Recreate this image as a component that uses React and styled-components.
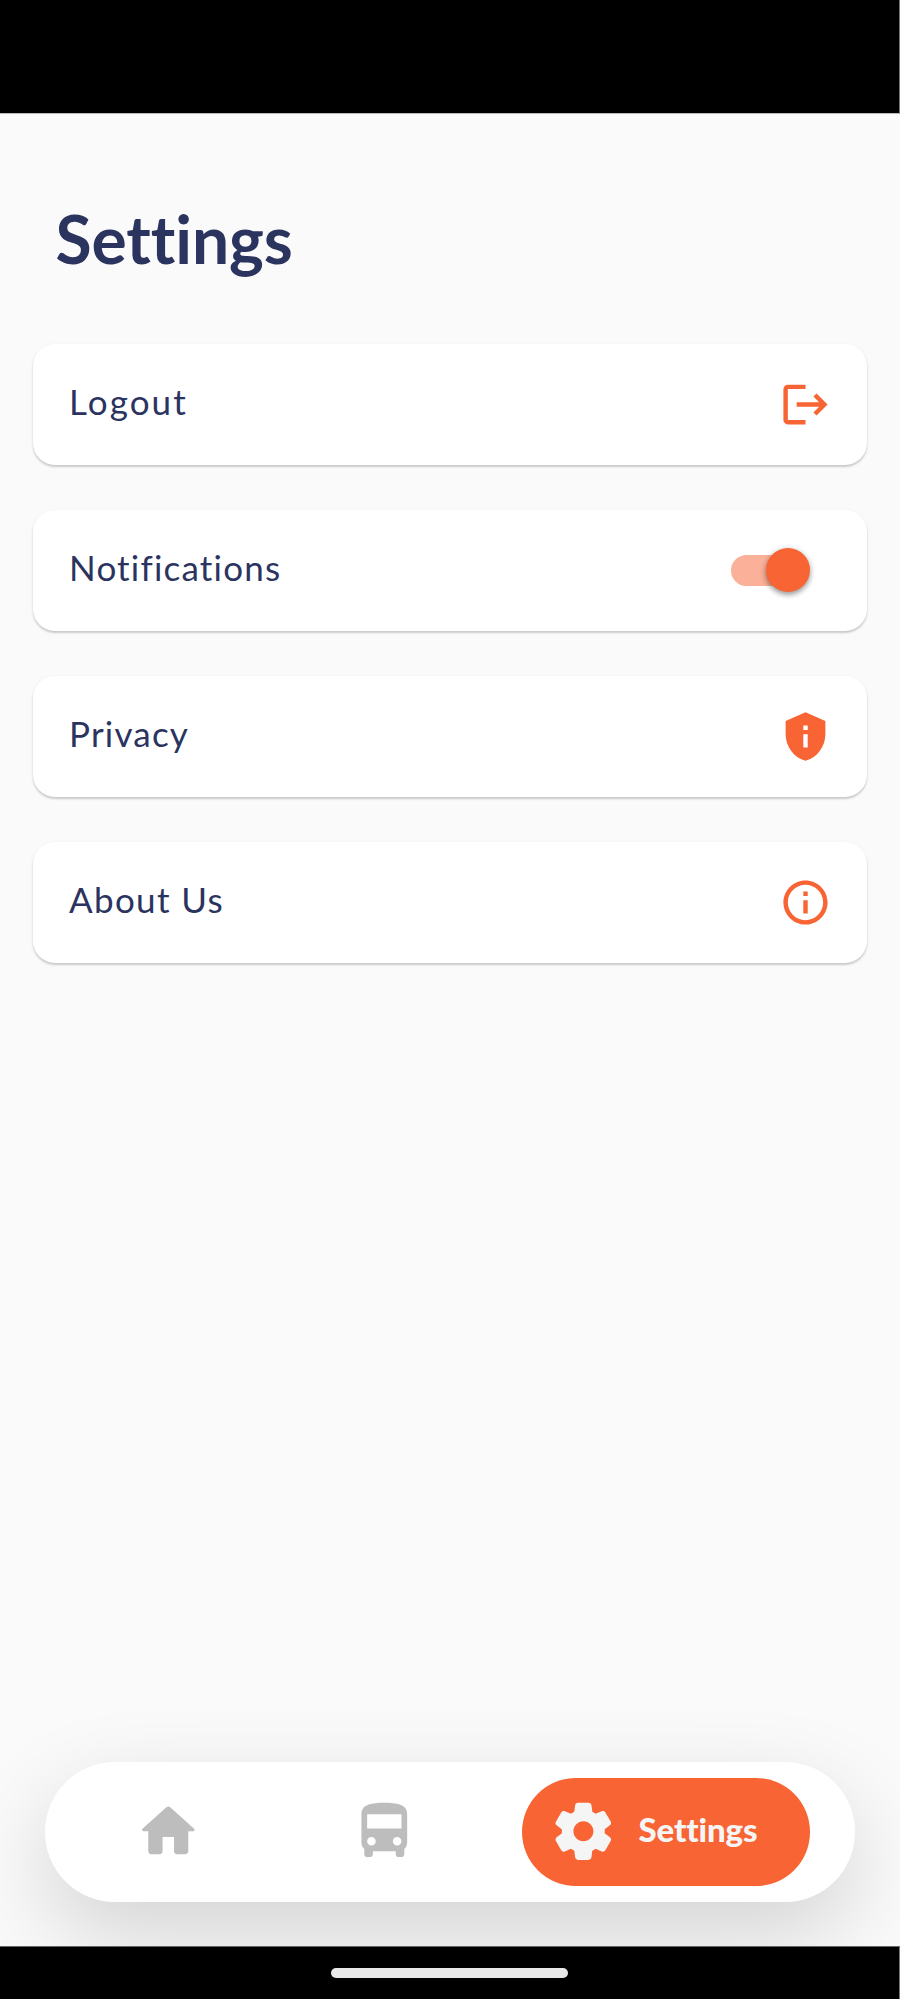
import React, { useState } from "react";
import styled, { createGlobalStyle } from "styled-components";

const colors = {
  navy: "#2b345f",
  orange: "#f86434",
  track: "#fbb099",
  page: "#fafafa",
  idle: "#bdbdbd",
  onOrange: "#f5f5f5",
};

const GlobalStyle = createGlobalStyle`
  * { box-sizing: border-box; }
  body { margin: 0; background: ${colors.page}; }
  button { border: 0; padding: 0; background: none; font: inherit; color: inherit; }
`;

const Screen = styled.div`
  width: 900px;
  height: 1999px;
  display: flex;
  flex-direction: column;
  overflow: hidden;
  background: ${colors.page};
  color: ${colors.navy};
  font-family: Lato, "Liberation Sans", sans-serif;
`;

const StatusBar = styled.div`
  flex: 0 0 114px;
  background: #000;
  border-bottom: 1px solid #b9b9b9;
  border-right: 1px solid #777;
`;

const Content = styled.main`
  flex: 1;
  min-height: 0;
  display: flex;
  flex-direction: column;
  padding: 85px 33px 44px;
`;

const Title = styled.h1`
  margin: 0 0 64.5px 22.5px;
  height: 80px;
  line-height: 80px;
  font-size: 66px;
  font-weight: 700;
  letter-spacing: -0.1px;
  white-space: nowrap;
`;

const List = styled.div`
  display: flex;
  flex-direction: column;
  gap: 44.5px;
`;

const Card = styled.div`
  height: 121.5px;
  display: flex;
  align-items: center;
  justify-content: space-between;
  padding: 0 35px 0 36px;
  border-radius: 22px;
  background: #fff;
  box-shadow: 0 2px 2px rgba(0, 0, 0, 0.17), 0 1px 4px rgba(0, 0, 0, 0.05);
`;

const CardLabel = styled.span`
  font-size: 35px;
  line-height: 46px;
  padding-bottom: 6px;
  letter-spacing: ${(p) => p.$spacing}px;
  white-space: nowrap;
`;

const Icon = styled.svg`
  display: block;
  flex: none;
  width: ${(p) => p.$size}px;
  height: ${(p) => p.$size}px;
  fill: currentColor;
`;

const CardIcon = styled(Icon)`
  color: ${colors.orange};
`;

const Switch = styled.button`
  display: flex;
  align-items: center;
  justify-content: ${(p) => (p.$on ? "flex-end" : "flex-start")};
  width: 73px;
  height: 31px;
  margin-right: 28px;
  border-radius: 16px;
  background: ${(p) => (p.$on ? colors.track : "#c4c4c4")};
`;

const Knob = styled.span`
  flex: none;
  width: 44px;
  height: 44px;
  margin: 0 -6px;
  border-radius: 50%;
  background: ${colors.orange};
  box-shadow: 0 3px 5px rgba(0, 0, 0, 0.3), 0 1px 7px rgba(0, 0, 0, 0.16);
`;

const NavBar = styled.nav`
  margin: auto 12px 0;
  height: 140px;
  flex: none;
  display: flex;
  align-items: center;
  padding: 0 45px 0 89px;
  border-radius: 70px;
  background: #fff;
  box-shadow: 0 33px 90px rgba(0, 0, 0, 0.158);
`;

const NavItem = styled.button`
  display: flex;
  margin-right: ${(p) => p.$after}px;
  padding-bottom: 1px;
  color: ${colors.idle};
`;

const ActiveItem = styled(NavItem)`
  width: 288px;
  height: 108px;
  align-items: center;
  gap: 21px;
  margin-left: auto;
  padding: 0 0 2px 27px;
  border-radius: 54px;
  background: ${colors.orange};
  color: ${colors.onOrange};
`;

const ActiveLabel = styled.span`
  font-size: 33px;
  font-weight: 900;
  line-height: 40px;
  padding-bottom: 4px;
  letter-spacing: -0.15px;
  white-space: nowrap;
`;

const GestureBar = styled.div`
  flex: 0 0 53px;
  display: flex;
  align-items: center;
  justify-content: center;
  background: #000;
  border-top: 1px solid #666;
  border-right: 1px solid #777;
`;

const GestureHandle = styled.div`
  width: 237px;
  height: 10px;
  border-radius: 5px;
  background: #e8e8e8;
`;

const paths = {
  logout:
    "M17 7l-1.41 1.41L18.17 11H8v2h10.17l-2.58 2.58L17 17l5-5zM4 5h8V3H4c-1.1 0-2 .9-2 2v14c0 1.1.9 2 2 2h8v-2H4V5z",
  privacy:
    "M12 1L3 5v6c0 5.55 3.84 10.74 9 12 5.16-1.26 9-6.45 9-12V5l-9-4zM11 7h2v2h-2V7zm0 4h2v6h-2v-6z",
  info:
    "M11 7h2v2h-2zm0 4h2v6h-2zm1-9C6.48 2 2 6.48 2 12s4.48 10 10 10 10-4.48 10-10S17.52 2 12 2zm0 18c-4.41 0-8-3.59-8-8s3.59-8 8-8 8 3.59 8 8-3.59 8-8 8z",
  home:
    "M10 19v-5h4v5c0 .55.45 1 1 1h3c.55 0 1-.45 1-1v-7h1.7c.46 0 .68-.57.33-.87L12.67 3.6c-.38-.34-.96-.34-1.34 0l-8.36 7.53c-.34.3-.13.87.33.87H5v7c0 .55.45 1 1 1h3c.55 0 1-.45 1-1z",
  bus:
    "M4 16c0 .88.39 1.67 1 2.22V20c0 .55.45 1 1 1h1c.55 0 1-.45 1-1v-1h8v1c0 .55.45 1 1 1h1c.55 0 1-.45 1-1v-1.78c.61-.55 1-1.34 1-2.22V6c0-3.5-3.58-4-8-4s-8 .5-8 4v10zm3.5 1c-.83 0-1.5-.67-1.5-1.5S6.67 14 7.5 14s1.5.67 1.5 1.5S8.33 17 7.5 17zm9 0c-.83 0-1.5-.67-1.5-1.5s.67-1.5 1.5-1.5 1.5.67 1.5 1.5-.67 1.5-1.5 1.5zm1.5-6H6V6h12v5z",
  settings:
    "M19.5 12c0-.23-.01-.45-.03-.68l1.86-1.41c.4-.3.51-.86.26-1.3l-1.87-3.23c-.25-.44-.79-.62-1.25-.42l-2.15.91c-.37-.26-.76-.49-1.17-.68l-.29-2.31C14.8 2.38 14.37 2 13.87 2h-3.73c-.51 0-.94.38-1 .88l-.29 2.31c-.41.19-.8.42-1.17.68l-2.15-.91c-.46-.2-1-.02-1.25.42L2.41 8.62c-.25.44-.14.99.26 1.3l1.86 1.41C4.51 11.55 4.5 11.77 4.5 12s.01.45.03.68l-1.86 1.41c-.4.3-.51.86-.26 1.3l1.87 3.23c.25.44.79.62 1.25.42l2.15-.91c.37.26.76.49 1.17.68l.29 2.31c.06.5.49.88.99.88h3.73c.5 0 .93-.38.99-.88l.29-2.31c.41-.19.8-.42 1.17-.68l2.15.91c.46.2 1 .02 1.25-.42l1.87-3.23c.25-.44.14-.99-.26-1.3l-1.86-1.41c.03-.23.04-.45.04-.68zm-7.46 3.5c-1.93 0-3.5-1.57-3.5-3.5s1.57-3.5 3.5-3.5 3.5 1.57 3.5 3.5-1.57 3.5-3.5 3.5z",
};

function Glyph({ name, size, as: Component = Icon }) {
  return (
    <Component viewBox="0 0 24 24" $size={size} aria-hidden="true">
      <path fillRule="evenodd" d={paths[name]} />
    </Component>
  );
}

const rows = [
  { label: "Logout", icon: "logout", spacing: 2.1 },
  { label: "Notifications", icon: null, spacing: 1.2 },
  { label: "Privacy", icon: "privacy", spacing: 1.2 },
  { label: "About Us", icon: "info", spacing: 1.35 },
];

export default function App() {
  const [notify, setNotify] = useState(true);
  return (
    <>
      <GlobalStyle />
      <Screen>
        <StatusBar />
        <Content>
          <Title>Settings</Title>
          <List>
            {rows.map((row) => (
              <Card key={row.label}>
                <CardLabel $spacing={row.spacing}>{row.label}</CardLabel>
                {row.icon ? (
                  <Glyph name={row.icon} size={53} as={CardIcon} />
                ) : (
                  <Switch
                    $on={notify}
                    role="switch"
                    aria-checked={notify}
                    aria-label={row.label}
                    onClick={() => setNotify(!notify)}
                  >
                    <Knob />
                  </Switch>
                )}
              </Card>
            ))}
          </List>
          <NavBar>
            <NavItem $after={147} aria-label="Home">
              <Glyph name="home" size={68.6} />
            </NavItem>
            <NavItem $after={0} aria-label="Buses">
              <Glyph name="bus" size={68.6} />
            </NavItem>
            <ActiveItem $after={0}>
              <Glyph name="settings" size={68.6} />
              <ActiveLabel>Settings</ActiveLabel>
            </ActiveItem>
          </NavBar>
        </Content>
        <GestureBar>
          <GestureHandle />
        </GestureBar>
      </Screen>
    </>
  );
}
